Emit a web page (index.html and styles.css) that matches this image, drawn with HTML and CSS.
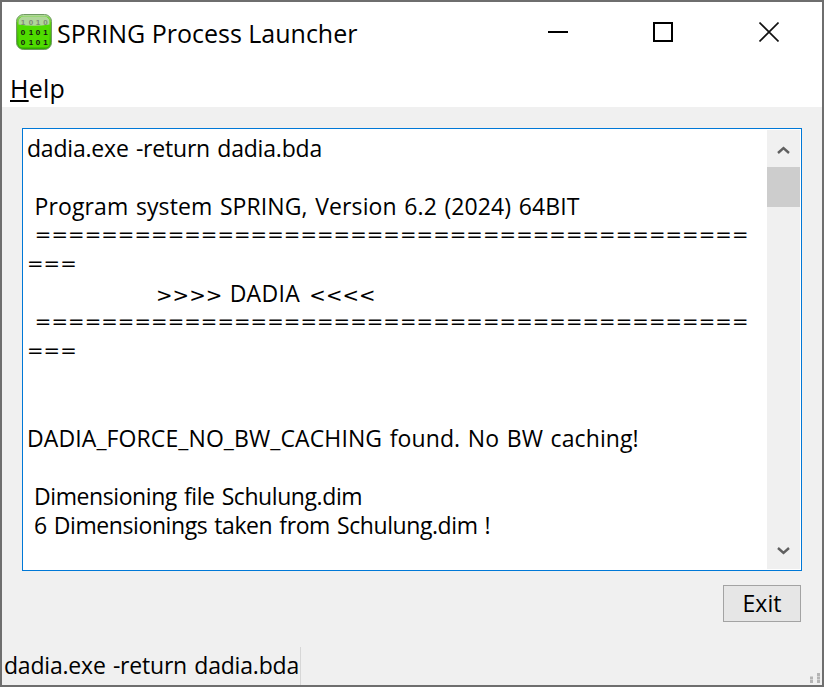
FILE: index.html
```html
<!DOCTYPE html>
<html lang="en">
<head>
<meta charset="utf-8">
<title>SPRING Process Launcher</title>
<link rel="stylesheet" href="styles.css">
</head>
<body>
<div class="window">
  <header class="titlebar">
    <svg class="app-icon" width="36" height="36" viewBox="0 0 36 36">
      <defs>
        <linearGradient id="g" x1="0" y1="0" x2="0" y2="1">
          <stop offset="0" stop-color="#b9d8a8"/>
          <stop offset="0.25" stop-color="#5fd010"/>
          <stop offset="1" stop-color="#2fa800"/>
        </linearGradient>
      </defs>
      <rect x="0.5" y="0.5" width="35" height="35" rx="7" fill="url(#g)" stroke="#6f9a62"/>
      <rect x="2.500" y="2.500" width="31" height="31" rx="4" fill="#4fdc00"/>
      <path d="M2.500 8 Q2.500 2.500 8 2.500 H28 Q33.500 2.500 33.500 8 V10.500 Q18 13 2.500 10.500 Z" fill="#c8d4c0" opacity="0.8"/>
      <g class="bits">
        <text x="7 15 22 29.500" y="11" class="bit-faded">1010</text>
        <text x="7 15 22 29.500" y="21">0101</text>
        <text x="7 15 22 29.500" y="31">0101</text>
      </g>
    </svg>
    <span class="title">SPRING Process Launcher</span>
    <div class="caption">
      <svg class="cap-btn" width="20" height="20" viewBox="0 0 20 20"><path d="M0 10H20" stroke="#000" stroke-width="2"/></svg>
      <svg class="cap-btn" width="20" height="20" viewBox="0 0 20 20"><rect x="1" y="1" width="18" height="18" fill="none" stroke="#000" stroke-width="2"/></svg>
      <svg class="cap-btn cap-close" width="20" height="20" viewBox="0 0 20 20"><path d="M0.500 0.500L19.500 19.500M19.500 0.500L0.500 19.500" stroke="#111" stroke-width="1.600"/></svg>
    </div>
  </header>
  <nav class="menubar"><span class="menu-item"><u>H</u>elp</span></nav>
  <main class="client">
    <div class="output">
<pre class="log">dadia.exe -return dadia.bda

<span class="caps"> Program system SPRING, Version 6.2 (2024) 64BIT</span>
<span class="rule rule-line"> ===========================================</span>
<span class="rule rule-line">===</span>
                  <span class="rule rule-first">&gt;&gt;&gt;&gt;</span> <span class="name">DADIA</span> <span class="rule rule-last">&lt;&lt;&lt;&lt;</span>
<span class="rule rule-line"> ===========================================</span>
<span class="rule rule-line">===</span>


<span class="caps">DADIA_FORCE_NO_BW_CACHING found. No BW caching!</span>

<span class="narrow"> Dimensioning file Schulung.dim</span>
<span class="narrow"> 6 Dimensionings taken from Schulung.dim !</span></pre>
      <div class="scrollbar">
        <svg class="arrow" width="13" height="8" viewBox="0 0 13 8"><path d="M1 7L6.500 2L12 7" fill="none" stroke="#606060" stroke-width="2.400"/></svg>
        <div class="thumb"></div>
        <div class="track"></div>
        <svg class="arrow" width="13" height="8" viewBox="0 0 13 8"><path d="M1 1L6.500 6L12 1" fill="none" stroke="#606060" stroke-width="2.400"/></svg>
      </div>
    </div>
    <div class="actions"><button class="exit" type="button">Exit</button></div>
  </main>
  <footer class="statusbar">
    <span class="status-pane">dadia.exe -return dadia.bda</span>
    <svg class="grip" width="10" height="10" viewBox="0 0 10 10"><path d="M7 0h3v3H7zM0 3.500h3v3H0zM7 3.500h3v3H7zM0 7h3v3H0zM7 7h3v3H7z" fill="#b4b4b4"/></svg>
  </footer>
</div>
</body>
</html>
```
FILE: styles.css
```css
* { box-sizing: border-box; }
html, body { margin: 0; padding: 0; height: 100%; }
body { background: #fff; overflow: hidden; }
.window {
  width: 824px;
  height: 687px;
  border: 2px solid #6e6e6e;
  display: flex;
  flex-direction: column;
  background: #f0f0f0;
  font-family: "Open Sans", "Noto Sans", sans-serif;
  font-size: 23px;
  color: #000;
}
.titlebar {
  height: 64px;
  background: #fff;
  display: flex;
  align-items: center;
  padding: 0 0 2px 14px;
  flex: none;
}
.app-icon { flex: none; margin-top: -2px; }
.bits text { font: bold 8px "Liberation Sans", sans-serif; fill: #111; text-anchor: middle; }
.bits .bit-faded { fill: #7c8a74; }
.title { margin-left: 5px; font-size: 25px; white-space: nowrap; }
.caption {
  margin-left: auto;
  display: flex;
  gap: 85px;
  padding-right: 43px;
  margin-top: -3px;
}
.cap-btn { display: block; }
.cap-close { margin-left: 1px; }
.menubar {
  height: 41px;
  background: #fff;
  flex: none;
  padding-left: 8px;
  line-height: 44px;
}
.menu-item { font-size: 25px; letter-spacing: 0.2px; }
.client {
  flex: 1;
  display: flex;
  flex-direction: column;
  padding: 21px 20px 0;
  min-height: 0;
}
.output {
  height: 443px;
  border: 1px solid #0078d7;
  background: #fff;
  display: flex;
  flex: none;
}
.log {
  flex: 1;
  margin: 0;
  padding: 5px 0 0 4px;
  font: inherit;
  line-height: 29px;
  letter-spacing: -0.2px;
  word-spacing: 1.5px;
  white-space: pre;
  overflow: hidden;
}
.caps { letter-spacing: 0.1px; }
.narrow { letter-spacing: -0.42px; }
.rule { font-family: "DejaVu Sans", sans-serif; font-size: 19.7px; line-height: 0; letter-spacing: 0.1px; }
.rule-line { vertical-align: 3px; }
.rule-first { margin-left: -2px; }
.rule-last { margin-left: 2px; }
.name { letter-spacing: 0.3px; }
.scrollbar {
  width: 33px;
  flex: none;
  margin: 1px 1px 1px 0;
  background: #f0f0f0;
  display: flex;
  flex-direction: column;
  align-items: center;
  padding: 16px 0 14px;
}
.arrow { flex: none; display: block; }
.thumb {
  width: 33px;
  height: 40px;
  background: #cdcdcd;
  margin-top: 13px;
  flex: none;
}
.track { flex: 1; }
.actions {
  display: flex;
  justify-content: flex-end;
  padding: 14px 1px 0 0;
}
.exit {
  width: 78px;
  height: 37px;
  border: 1px solid #a3a3a3;
  background: #e6e6e6;
  font: inherit;
  font-size: 23px;
  color: #000;
  padding: 0;
  line-height: 1;
}
.statusbar {
  height: 38px;
  flex: none;
  display: flex;
  align-items: center;
  justify-content: space-between;
}
.status-pane {
  height: 38px;
  padding: 0 1px 0 2px;
  border-right: 1px solid #d7d7d7;
  line-height: 36px;
  letter-spacing: -0.2px;
  word-spacing: 1.5px;
  white-space: nowrap;
}
.grip { align-self: flex-end; margin: 0 2px 2px 0; }
```
